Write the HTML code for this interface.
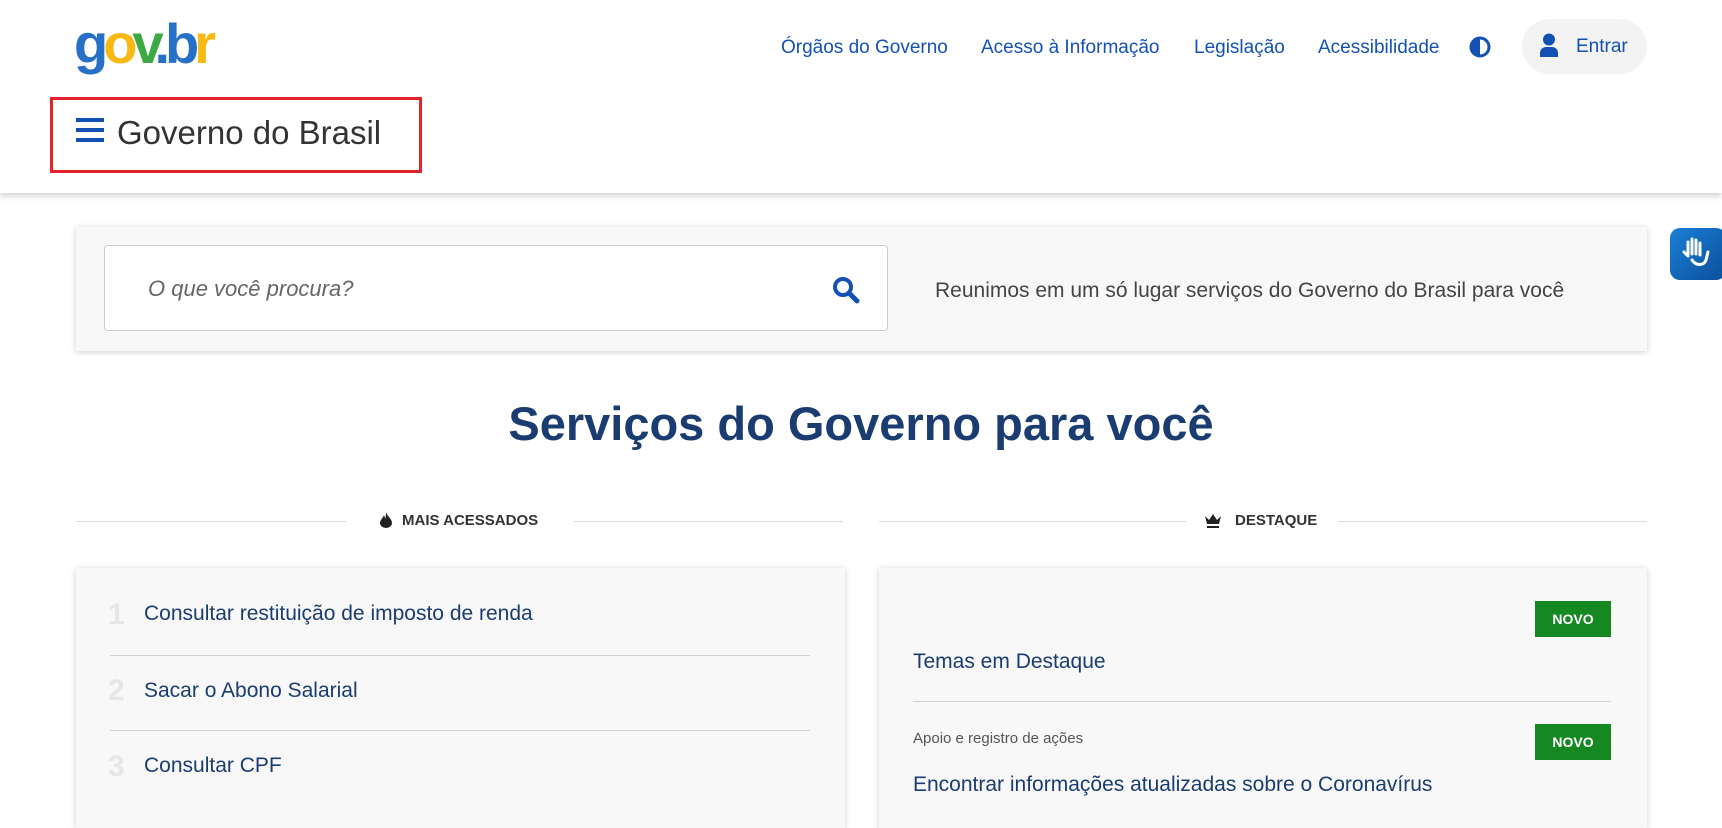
<!DOCTYPE html>
<html><head><meta charset="utf-8"><style>
*{margin:0;padding:0;box-sizing:border-box}
body{width:1722px;height:796px;overflow:hidden;background:#fff;font-family:"Liberation Sans",sans-serif;position:relative}
.a{position:absolute;white-space:nowrap}
.nav{top:37px;font-size:19px;color:#1351b4}
.hdr{position:absolute;left:0;top:0;width:1722px;height:193px;background:#fff;box-shadow:0 3px 6px rgba(0,0,0,.18)}
.card{position:absolute;background:#f8f8f8;box-shadow:0 1px 6px rgba(0,0,0,.2)}
.item{font-size:21px;color:#1b3c70}
.num{font-size:30px;color:#e6e6e6;font-weight:bold}
.sep{position:absolute;height:1px;background:#d2d2d2}
.novo{position:absolute;background:#168821;color:#fff;font-weight:bold;font-size:14px;width:76px;height:36px;line-height:36px;text-align:center}
.line{position:absolute;height:1px;background:#dcdcdc;top:521px}
.sh{top:512px;font-size:15px;font-weight:bold;color:#333}
</style></head><body>
<div class="hdr"></div>
<div class="a" style="left:74px;top:14px;font-size:56px;font-weight:bold;letter-spacing:-5px;line-height:60px"><span style="color:#2670c8">g</span><span style="color:#f8b913">o</span><span style="color:#3da942">v</span><span style="color:#2670c8">.</span><span style="color:#2670c8">b</span><span style="color:#f8b913">r</span></div>
<div class="a nav" style="left:781px">Órgãos do Governo</div>
<div class="a nav" style="left:981px">Acesso à Informação</div>
<div class="a nav" style="left:1194px">Legislação</div>
<div class="a nav" style="left:1318px">Acessibilidade</div>
<svg class="a" style="left:1469px;top:36px" width="22" height="22" viewBox="0 0 22 22"><circle cx="11" cy="11" r="9" fill="none" stroke="#1351b4" stroke-width="3"/><path d="M11 2a9 9 0 0 0 0 18z" fill="#1351b4"/></svg>
<div class="a" style="left:1522px;top:19px;width:125px;height:55px;border-radius:28px;background:#f3f3f3"></div>
<svg class="a" style="left:1538px;top:33px" width="22" height="24" viewBox="0 0 22 24"><circle cx="11" cy="6.5" r="6" fill="#1351b4"/><path d="M2 24v-4a6 6 0 0 1 6-6h6a6 6 0 0 1 6 6v4z" fill="#1351b4"/></svg>
<div class="a" style="left:1576px;top:36px;font-size:19px;color:#1351b4">Entrar</div>
<div class="a" style="left:50px;top:97px;width:372px;height:76px;border:3px solid #e52229"></div>
<svg class="a" style="left:76px;top:118px" width="28" height="25"><rect y="0" width="28" height="4" fill="#1351b4"/><rect y="10" width="28" height="4" fill="#1351b4"/><rect y="20" width="28" height="4" fill="#1351b4"/></svg>
<div class="a" style="left:117px;top:114px;font-size:33px;color:#333">Governo do Brasil</div>

<div class="card" style="left:76px;top:227px;width:1571px;height:124px"></div>
<div class="a" style="left:104px;top:245px;width:784px;height:86px;background:#fff;border:1px solid #ccc;border-radius:4px"></div>
<div class="a" style="left:148px;top:276px;font-size:22px;font-style:italic;color:#666">O que você procura?</div>
<svg class="a" style="left:832px;top:276px" width="28" height="28" viewBox="0 0 28 28"><circle cx="11" cy="11" r="8" fill="none" stroke="#1351b4" stroke-width="4"/><path d="M17 17l8 8" stroke="#1351b4" stroke-width="5" stroke-linecap="round"/></svg>
<div class="a" style="left:935px;top:279px;font-size:21px;color:#444">Reunimos em um só lugar serviços do Governo do Brasil para você</div>
<div class="a" style="left:1670px;top:228px;width:56px;height:52px;border-radius:10px;background:linear-gradient(135deg,#1a7fd4,#0b4f9c)"></div>
<svg class="a" style="left:1682px;top:236px" width="30" height="36" viewBox="0 0 30 36"><path d="M6 20V6M10 18V3M14 18V4M18 19V7M6 20l-4-4M10 24c4 6 12 6 14 0l2-8" stroke="#fff" stroke-width="3" fill="none" stroke-linecap="round"/></svg>

<div class="a" style="left:0;width:1722px;text-align:center;top:396px;font-size:47px;color:#1b3c70;font-weight:bold">Serviços do Governo para você</div>

<div class="line" style="left:76px;width:270px"></div><div class="line" style="left:574px;width:269px"></div>
<svg class="a" style="left:380px;top:512px" width="12" height="16" viewBox="0 0 12 16"><path d="M6 0C7 4 12 7 12 11a6 5 0 0 1-12 0C0 8 3 6 4 3c1 2 1 3 1 4 1-2 1-5 1-7z" fill="#222"/></svg>
<div class="a sh" style="left:402px">MAIS ACESSADOS</div>
<div class="line" style="left:879px;width:307px"></div><div class="line" style="left:1338px;width:309px"></div>
<svg class="a" style="left:1204px;top:514px" width="18" height="14" viewBox="0 0 18 14"><path d="M1 2l4 4 4-6 4 6 4-4-2 8H3z M3 12h12v2H3z" fill="#222"/></svg>
<div class="a sh" style="left:1235px">DESTAQUE</div>

<div class="card" style="left:76px;top:568px;width:769px;height:260px"></div>
<div class="a num" style="left:108px;top:598px">1</div><div class="a item" style="left:144px;top:602px">Consultar restituição de imposto de renda</div>
<div class="sep" style="left:110px;width:700px;top:655px"></div>
<div class="a num" style="left:108px;top:674px">2</div><div class="a item" style="left:144px;top:679px">Sacar o Abono Salarial</div>
<div class="sep" style="left:110px;width:700px;top:730px"></div>
<div class="a num" style="left:108px;top:750px">3</div><div class="a item" style="left:144px;top:754px">Consultar CPF</div>

<div class="card" style="left:879px;top:568px;width:768px;height:260px"></div>
<div class="novo" style="left:1535px;top:601px">NOVO</div>
<div class="a item" style="left:913px;top:650px">Temas em Destaque</div>
<div class="sep" style="left:913px;width:698px;top:701px"></div>
<div class="a" style="left:913px;top:730px;font-size:15px;color:#555">Apoio e registro de ações</div>
<div class="novo" style="left:1535px;top:724px">NOVO</div>
<div class="a item" style="left:913px;top:773px">Encontrar informações atualizadas sobre o Coronavírus</div>
</body></html>
